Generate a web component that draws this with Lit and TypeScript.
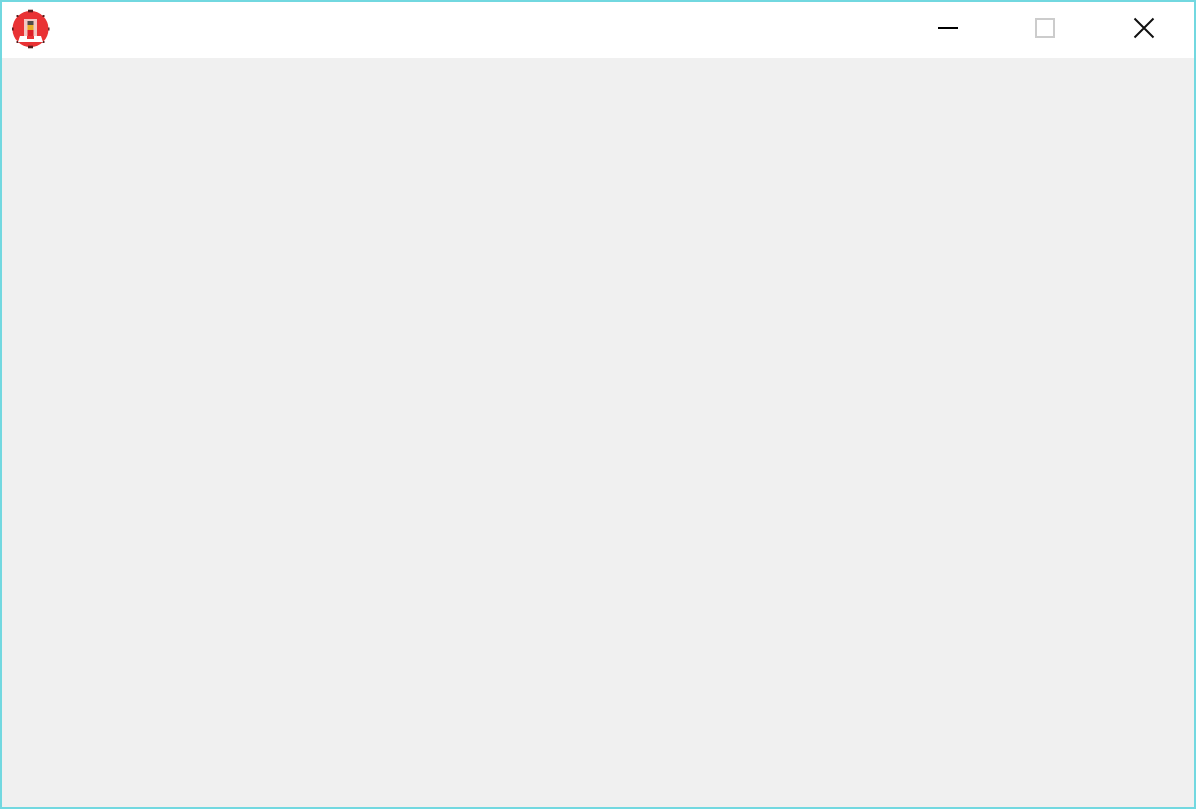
import { LitElement, html, css, svg } from "lit";
import { customElement } from "lit/decorators.js";

@customElement("app-root")
export class AppRoot extends LitElement {
  static styles = css`
    :host { display: block; }
    .window {
      box-sizing: border-box;
      width: 1196px;
      height: 809px;
      border: 2px solid #72d8e0;
      background: #f0f0f0;
      display: flex;
      flex-direction: column;
    }
    .titlebar {
      height: 56px;
      flex: none;
      background: #fff;
      display: flex;
      align-items: flex-start;
      justify-content: space-between;
    }
    .logo { display: block; margin: 7px 0 0 8px; filter: blur(0.6px); }
    .controls { display: flex; margin-right: 1px; }
    .control {
      width: 98px;
      height: 52px;
      display: flex;
      align-items: center;
      justify-content: center;
    }
    .control svg { display: block; }
  `;

  render() {
    return html`
      <div class="window">
        <div class="titlebar">
          <svg class="logo" width="40" height="40" viewBox="0 0 40 40">
            <circle cx="20.5" cy="20" r="18" fill="#e93234"></circle>
            ${[[20.5, 2, 5, 2.6], [20.5, 38, 5, 2.6], [2.8, 20, 1.6, 3], [38.8, 20, 1.4, 3], [7.5, 7, 2, 2], [33.5, 7, 2, 2], [7.5, 33, 2, 2], [33.5, 33, 2, 2]].map(
              ([x, y, w, h]) => svg`<rect x=${x - w / 2} y=${y - h / 2} width=${w} height=${h} fill="#5a1c1c"></rect>`
            )}
            <rect x="14" y="10" width="13" height="17" fill="#f3c6c2"></rect>
            <rect x="17.5" y="12" width="6" height="4" fill="#4f4a48"></rect>
            <rect x="17.5" y="16" width="6" height="5" fill="#e7ac26"></rect>
            <rect x="17.5" y="21" width="6" height="6" fill="#dd1f26"></rect>
            <path d="M8 33 L10 27 H17 V30 H24 V27 H31 L33 33 Z" fill="#fff"></path>
          </svg>
          <div class="controls">
            <div class="control">
              <svg width="22" height="4" viewBox="0 0 22 4"><rect x="1" y="1" width="20" height="2" fill="#000"></rect></svg>
            </div>
            <div class="control">
              <svg width="22" height="20" viewBox="0 0 22 20"><rect x="1" y="1" width="18" height="18" fill="#fff" stroke="#cccccc" stroke-width="2"></rect></svg>
            </div>
            <div class="control">
              <svg width="22" height="22" viewBox="0 0 22 22"><path d="M1.5 1.5 L20.5 20.5 M20.5 1.5 L1.5 20.5" stroke="#111" stroke-width="2" fill="none"></path></svg>
            </div>
          </div>
        </div>
      </div>
    `;
  }
}
